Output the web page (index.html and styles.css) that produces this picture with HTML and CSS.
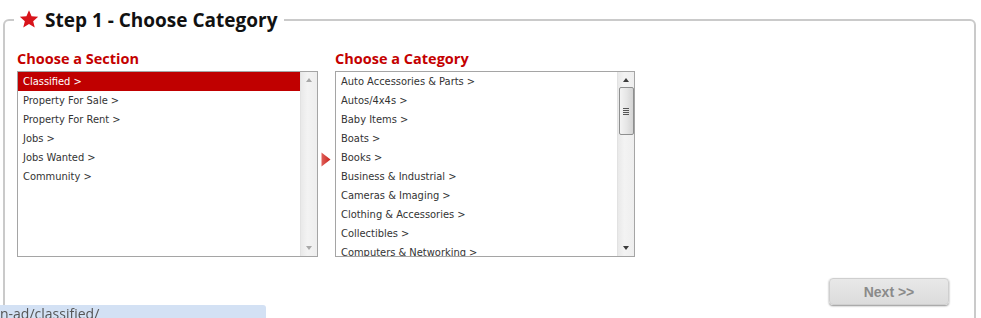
FILE: index.html
```html
<!DOCTYPE html>
<html lang="en">
<head>
    <meta charset="UTF-8">
    <title>Post an Ad - Step 1</title>
    <link rel="stylesheet" href="styles.css">
</head>
<body>

    <fieldset class="step">
        <legend>
            <svg class="star" width="20" height="20" viewBox="0 0 24 24">
                <path d="M12 1.5l3.1 7.3 7.9.6-6 5.2 1.9 7.7L12 18.1l-6.9 4.2 1.9-7.7-6-5.2 7.9-.6z" fill="#d8141b"/>
            </svg>
            Step 1 - Choose Category
        </legend>

        <div class="pickers">
            <!-- Sektion -->
            <div class="picker">
                <h3>Choose a Section</h3>
                <div class="listbox">
                    <ul class="options">
                        <li class="selected">Classified &gt;</li>
                        <li>Property For Sale &gt;</li>
                        <li>Property For Rent &gt;</li>
                        <li>Jobs &gt;</li>
                        <li>Jobs Wanted &gt;</li>
                        <li>Community &gt;</li>
                    </ul>
                    <div class="scrollbar disabled">
                        <span class="arrow up"></span>
                        <span class="arrow down"></span>
                    </div>
                </div>
            </div>

            <div class="pointer">
                <svg width="10" height="15" viewBox="0 0 10 15">
                    <defs>
                        <linearGradient id="pg" x1="0" y1="0" x2="1" y2="0">
                            <stop offset="0" stop-color="#e0605a"/>
                            <stop offset="1" stop-color="#c8231d"/>
                        </linearGradient>
                    </defs>
                    <path d="M0.5 0.5L9.5 7.5L0.5 14.5Z" fill="url(#pg)"/>
                </svg>
            </div>

            <!-- Kategori -->
            <div class="picker">
                <h3>Choose a Category</h3>
                <div class="listbox">
                    <ul class="options">
                        <li>Auto Accessories &amp; Parts &gt;</li>
                        <li>Autos/4x4s &gt;</li>
                        <li>Baby Items &gt;</li>
                        <li>Boats &gt;</li>
                        <li>Books &gt;</li>
                        <li>Business &amp; Industrial &gt;</li>
                        <li>Cameras &amp; Imaging &gt;</li>
                        <li>Clothing &amp; Accessories &gt;</li>
                        <li>Collectibles &gt;</li>
                        <li>Computers &amp; Networking &gt;</li>
                        <li>Electronics &gt;</li>
                    </ul>
                    <div class="scrollbar">
                        <span class="arrow up"></span>
                        <span class="thumb"><i></i><i></i><i></i><i></i></span>
                        <span class="arrow down"></span>
                    </div>
                </div>
            </div>
        </div>

        <div class="actions">
            <button class="next" disabled>Next &gt;&gt;</button>
        </div>
    </fieldset>

    <div class="status">n-ad/classified/</div>

</body>
</html>
```

FILE: styles.css
```css
* {
    margin: 0;
    padding: 0;
    box-sizing: border-box;
}

body {
    font-family: "Open Sans", Arial, sans-serif;
    background: #fff;
    color: #333;
    overflow: hidden;
    height: 318px;
}

/* Trin-boks */
.step {
    margin: 0 5px 0 3px;
    border: 2px solid #cacaca;
    border-radius: 6px 6px 0 0;
    padding: 9px 12px 200px 12px;
    min-width: 0;
}

.step legend {
    margin-left: -3px;
    padding: 0 7px 0 5px;
    font-size: 19px;
    font-weight: bold;
    line-height: 40px;
    color: #111;
    display: flex;
    align-items: center;
    gap: 6px;
}

.star {
    display: block;
    margin-top: -3px;
}

/* Lister */
.pickers {
    display: flex;
    align-items: flex-start;
}

.picker h3 {
    font-size: 14.5px;
    font-weight: bold;
    color: #c40000;
    line-height: 20px;
    margin-bottom: 2px;
}

.picker:first-child .listbox {
    width: 301px;
}

.picker:last-child .listbox {
    width: 300px;
}

.listbox {
    height: 186px;
    border: 1px solid #a5a5a5;
    display: flex;
    overflow: hidden;
    background: #fff;
}

.options {
    list-style: none;
    flex: 1;
    font-family: "DejaVu Sans", "Liberation Sans", sans-serif;
    font-stretch: condensed;
    font-size: 11px;
    color: #333;
}

.options li {
    height: 19px;
    line-height: 19px;
    padding-left: 5px;
    white-space: nowrap;
}

.options li.selected {
    background: #c00000;
    color: #fff;
}

/* Rullebjælke */
.scrollbar {
    width: 17px;
    background: linear-gradient(to right, #e9e9e9, #f3f3f3 40%, #eeeeee);
    border-left: 1px solid #e2e2e2;
    display: flex;
    flex-direction: column;
    align-items: center;
}

.arrow {
    width: 0;
    height: 0;
    border-left: 3.5px solid transparent;
    border-right: 3.5px solid transparent;
}

.arrow.up {
    border-bottom: 4px solid #3c3c3c;
    margin-top: 6px;
}

.arrow.down {
    border-top: 4px solid #3c3c3c;
    margin-top: auto;
    margin-bottom: 6px;
}

.scrollbar.disabled .arrow.up {
    border-bottom-color: #a8a8a8;
}

.scrollbar.disabled .arrow.down {
    border-top-color: #a8a8a8;
}

.thumb {
    width: 15px;
    height: 48px;
    margin-top: 5px;
    border: 1px solid #8e8f8f;
    border-radius: 2px;
    background: linear-gradient(to right, #f3f3f3, #e6e6e6 50%, #d4d4d4);
    display: flex;
    flex-direction: column;
    justify-content: center;
    align-items: center;
    gap: 1px;
}

.thumb i {
    display: block;
    width: 6px;
    height: 1px;
    background: #555;
}

.pointer {
    width: 17px;
    padding: 103px 0 0 3px;
}

.pointer svg {
    display: block;
}

/* Knap */
.actions {
    display: flex;
    justify-content: flex-end;
    padding-right: 13px;
    margin-top: 21px;
}

.next {
    width: 120px;
    height: 27px;
    border: 1px solid #cfcfcf;
    border-radius: 4px;
    background: linear-gradient(#e8e8e8, #dcdcdc);
    box-shadow: 0 1px 2px rgba(0, 0, 0, 0.45);
    font-family: "Liberation Sans", Arial, sans-serif;
    font-size: 14px;
    font-weight: bold;
    color: #8a8a8a;
}

/* Statuslinje (browser) */
.status {
    position: fixed;
    left: 0;
    bottom: 0;
    width: 266px;
    height: 13px;
    background: #d3e1f4;
    border-top-right-radius: 3px;
    font-family: "Open Sans", Arial, sans-serif;
    font-size: 14px;
    line-height: 18px;
    color: #555;
    white-space: nowrap;
    overflow: hidden;
}
```
